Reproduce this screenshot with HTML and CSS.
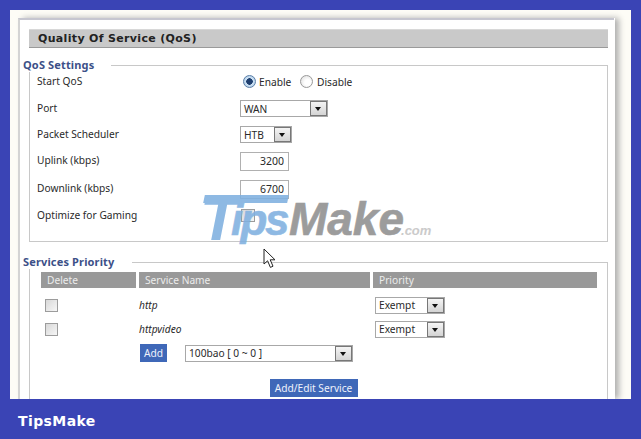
FILE: index.html
```html
<!DOCTYPE html>
<html lang="en">
<head>
<meta charset="utf-8">
<title>Quality Of Service (QoS)</title>
<link rel="stylesheet" href="styles.css">
</head>
<body>
<main class="stage">
  <div class="sheet">
    <div class="panel">
      <h1 class="title">Quality Of Service (QoS)</h1>
      <fieldset class="group">
        <legend class="legend legend-qos">QoS Settings</legend>
        <div class="form">
          <label class="field-label">Start QoS</label>
          <div class="radios">
            <span class="radio radio-on"></span><span class="radio-text radio-enable">Enable</span>
            <span class="radio"></span><span class="radio-text">Disable</span>
          </div>
          <label class="field-label">Port</label>
          <div class="select select-port"><span class="select-text">WAN</span><span class="arrow"></span></div>
          <label class="field-label">Packet Scheduler</label>
          <div class="select select-htb"><span class="select-text">HTB</span><span class="arrow"></span></div>
          <label class="field-label">Uplink (kbps)</label>
          <input class="number" type="text" value="3200">
          <label class="field-label">Downlink (kbps)</label>
          <input class="number" type="text" value="6700">
          <label class="field-label">Optimize for Gaming</label>
          <span class="check check-gaming"></span>
        </div>
      </fieldset>
      <fieldset class="group group-services">
        <legend class="legend legend-services">Services Priority</legend>
        <div class="table">
          <div class="th">Delete</div>
          <div class="th">Service Name</div>
          <div class="th">Priority</div>

          <div class="td"><span class="check"></span></div>
          <div class="td name">http</div>
          <div class="td"><div class="select select-prio"><span class="select-text">Exempt</span><span class="arrow"></span></div></div>

          <div class="td"><span class="check"></span></div>
          <div class="td name">httpvideo</div>
          <div class="td"><div class="select select-prio"><span class="select-text">Exempt</span><span class="arrow"></span></div></div>

          <div class="td"></div>
          <div class="td add-row">
            <button class="btn btn-add" type="button">Add</button>
            <div class="select select-service"><span class="select-text">100bao [ 0 ~ 0 ]</span><span class="arrow"></span></div>
          </div>
          <div class="td"></div>
        </div>
        <div class="actions"><button class="btn btn-edit" type="button">Add/Edit Service</button></div>
      </fieldset>
    </div>
  </div>
  <div class="watermark" aria-label="TipsMake.com">
    <span class="wm-bar"></span>
    <span class="wm-t">T</span><span class="wm-tips">ips</span><span class="wm-make">Make</span><span class="wm-com">.com</span>
  </div>
  <svg class="cursor" width="14" height="21" viewBox="0 0 14 21"><path d="M1 1V16L4.6 12.8L7.4 19.4L10 18.2L7.2 11.8H12Z" fill="#fff" stroke="#222" stroke-width="1"/></svg>
</main>
<footer class="footer">TipsMake</footer>
</body>
</html>
```
FILE: styles.css
```css
* { box-sizing: border-box; }
html, body { margin: 0; height: 100%; }
body {
  width: 641px;
  height: 439px;
  overflow: hidden;
  background: #3a44b5;
  display: flex;
  flex-direction: column;
  font-family: "Noto Sans", "Liberation Sans", sans-serif;
  font-size: 10.2px;
  color: #2a2a2a;
}
.stage {
  position: relative;
  flex: none;
  height: 399px;
  padding: 10px 10px 0 10px;
  overflow: hidden;
}
.sheet {
  height: 389px;
  background: #fdfcf6;
  padding: 8px 17px 0 8px;
  overflow: hidden;
}
.panel {
  height: 381px;
  background: #fff;
  border-top: 2px solid #c6c6d0;
  border-left: 2px solid #d4d4d4;
  padding: 9px 6px 0 9px;
  box-shadow: 1px 0 0 #fff, 5px 0 6px #b0b0b0;
}
.title {
  margin: 0 0 10px;
  height: 19px;
  padding-left: 9px;
  background: #c9c9c9;
  border-top: 1px solid #d8d8d8;
  border-bottom: 1px solid #9a9a9a;
  font-family: "DejaVu Sans", sans-serif;
  font-size: 11px;
  font-weight: 700;
  line-height: 18px;
  letter-spacing: .33px;
  color: #222;
}
.group {
  margin: 0 0 13px;
  padding: 0;
  min-width: 0;
  border: 1px solid #c8c8c8;
}
.legend {
  margin: 0 0 -4px -7px;
  padding: 0 17px 0 0;
  height: 14px;
  font-family: "Noto Sans", sans-serif;
  font-size: 11px;
  font-weight: 700;
  line-height: 14px;
  letter-spacing: .15px;
  color: #3c5088;
}
.legend-services { padding-right: 18px; }
.group-services { margin: 0; min-height: 170px; }
.form {
  display: grid;
  grid-template-columns: 203px 1fr;
  grid-template-rows: 27px 27px 25px 28px 28px 25px;
  align-items: center;
  padding: 0 0 13px 7px;
}
.field-label { display: block; padding-bottom: 2px; }
.radios { display: flex; align-items: center; padding-left: 3px; }
.radio {
  width: 13px;
  height: 13px;
  flex: none;
  border-radius: 50%;
  border: 1px solid #9a9a9a;
  background: radial-gradient(circle at 60% 60%, #fff 30%, #d8d8d8 100%);
}
.radio-on {
  border-color: #5a7ea8;
  background: radial-gradient(circle, #1f3f6f 0 3px, #cfe3f5 3.5px, #9fc0de 100%);
}
.radio-text { margin-left: 4px; padding-top: 1px; }
.radio-enable { width: 41px; margin-left: 3px; }
.select {
  display: flex;
  align-items: center;
  justify-content: space-between;
  height: 17px;
  padding-left: 3px;
  background: #fff;
  border: 1px solid #a8a8a8;
}
.select-port { width: 88px; }
.select-htb { width: 52px; }
.select-prio { width: 70px; }
.select-service { width: 168px; }
.arrow {
  position: relative;
  width: 17px;
  height: 15px;
  background: linear-gradient(#f4f4f4, #d4d4d4);
  border: 1px solid #777;
  flex: none;
}
.arrow::after {
  content: "";
  position: absolute;
  left: 4px;
  top: 5px;
  border: 3.5px solid transparent;
  border-top: 4px solid #111;
  border-bottom: 0;
}
.number {
  width: 49px;
  height: 19px;
  padding: 0 4px 0 0;
  font: inherit;
  font-size: 10.5px;
  color: #2a2a2a;
  text-align: right;
  background: #fff;
  border: 1px solid #b0b0b0;
  outline: 0;
}
.check {
  display: block;
  width: 13px;
  height: 13px;
  border: 1px solid #9c9c9c;
  background: linear-gradient(135deg, #d8d8d8, #f6f6f6);
}
.check-gaming { width: 14px; margin-left: 1px; }
.table {
  display: grid;
  grid-template-columns: 95px 231px 224px;
  grid-template-rows: 21px 24px 24px 24px;
  column-gap: 3px;
  margin-left: 11px;
  padding-top: 7px;
  align-items: center;
}
.th {
  align-self: start;
  height: 16px;
  padding-left: 6px;
  background: #999;
  color: #ececec;
  line-height: 16px;
}
.td .check { margin-left: 4px; }
.td .select { margin-left: 2px; }
.name { font-style: italic; }
.add-row { display: flex; align-items: center; gap: 18px; padding-left: 1px; }
.add-row .select { margin-left: 0; }
.btn {
  padding: 0;
  font: inherit;
  color: #eef2fb;
  background: #3f68b8;
  border: 0;
}
.btn-add { width: 27px; height: 18px; }
.btn-edit { width: 88px; height: 18px; }
.actions { display: flex; justify-content: center; margin: 14px 0 0 -10px; }
.watermark {
  position: absolute;
  left: 200px;
  top: 179px;
  display: flex;
  align-items: baseline;
  font-family: "Liberation Sans", sans-serif;
  font-weight: 700;
  font-style: italic;
  line-height: 70px;
  white-space: nowrap;
  opacity: .88;
}
.wm-bar {
  position: absolute;
  left: 4px;
  top: 16px;
  width: 84px;
  height: 8px;
  background: #7fb0e0;
  transform: skewX(-12deg);
}
.wm-t {
  position: relative;
  top: 5px;
  margin-right: -7px;
  font-size: 62px;
  color: #7fb0e0;
}
.wm-tips { font-size: 44px; letter-spacing: -2.5px; color: #7fb0e0; -webkit-text-stroke: .6px #7fb0e0; }
.wm-make { margin-left: 2px; font-size: 46px; color: #8f8f8f; -webkit-text-stroke: .6px #8f8f8f; }
.wm-com { margin-left: -3px; font-size: 13px; color: #c4c4c4; }
.cursor { position: absolute; left: 263px; top: 248px; }
.footer {
  flex: none;
  height: 40px;
  padding-left: 18px;
  font-family: "DejaVu Sans", sans-serif;
  font-size: 14px;
  font-weight: 700;
  line-height: 44px;
  letter-spacing: .4px;
  color: #fff;
}
```
